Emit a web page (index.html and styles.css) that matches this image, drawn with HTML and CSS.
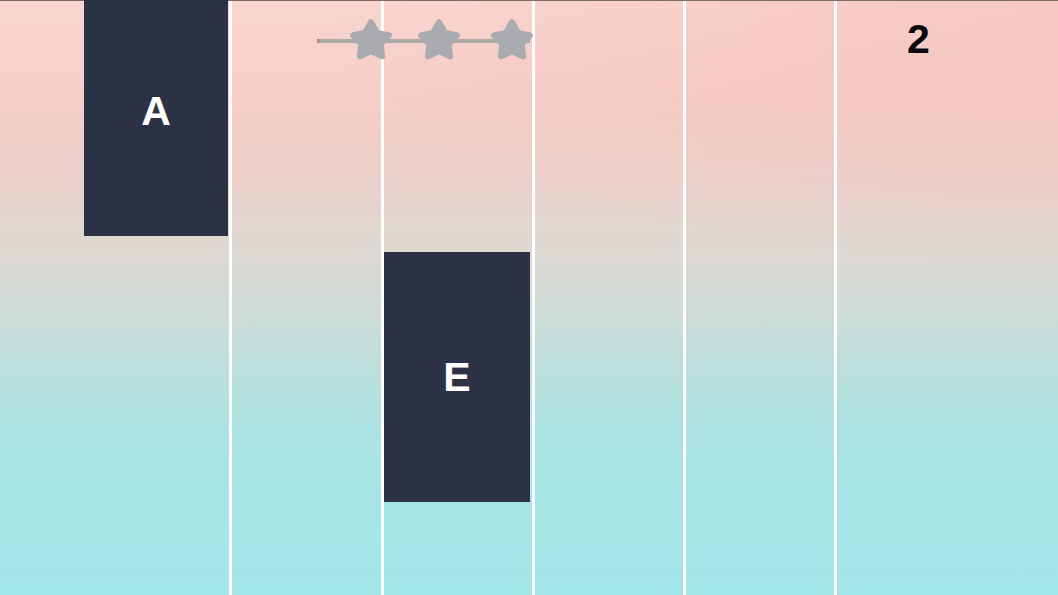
FILE: index.html
```html
<!DOCTYPE html>
<html>
<head>
<meta charset="utf-8">
<link rel="stylesheet" href="styles.css">
</head>
<body>
<div class="stage">
  <div class="lanes">
    <div class="lane lane-first">
      <div class="tile tile-a"><span>A</span></div>
    </div>
    <div class="lane"></div>
    <div class="lane">
      <div class="tile tile-e"><span>E</span></div>
    </div>
    <div class="lane"></div>
    <div class="lane"></div>
    <div class="lane lane-last"></div>
  </div>

  <div class="progress">
    <div class="bar"></div>
    <svg class="star s1" viewBox="0 0 44 42"><polygon points="22,5 27.29,14.72 38.17,16.75 30.56,24.78 31.99,35.75 22,31 12.01,35.75 13.44,24.78 5.83,16.75 16.71,14.72"/></svg>
    <svg class="star s2" viewBox="0 0 44 42"><polygon points="22,5 27.29,14.72 38.17,16.75 30.56,24.78 31.99,35.75 22,31 12.01,35.75 13.44,24.78 5.83,16.75 16.71,14.72"/></svg>
    <svg class="star s3" viewBox="0 0 44 42"><polygon points="22,5 27.29,14.72 38.17,16.75 30.56,24.78 31.99,35.75 22,31 12.01,35.75 13.44,24.78 5.83,16.75 16.71,14.72"/></svg>
  </div>

  <div class="score">2</div>
</div>
</body>
</html>
```

FILE: styles.css
```css
html, body {
  margin: 0;
  padding: 0;
  width: 100%;
  height: 100%;
  overflow: hidden;
}

.stage {
  position: relative;
  width: 1058px;
  height: 595px;
  box-sizing: border-box;
  border-top: 1px solid #7c6a66;
  background:
    radial-gradient(ellipse 70% 45% at 100% 0%, rgba(240,160,155,0.22), rgba(240,160,155,0) 100%),
    linear-gradient(to bottom, #f9d5cf 0%, #f5cec8 17%, #ecd1cb 30%, #e2d6d0 38%, #dbd9d3 44%, #cddcd8 53%, #bcdfdc 62%, #ace3e2 72%, #a6e5e5 82%, #a3e6e8 100%);
  font-family: "Liberation Sans", Arial, sans-serif;
}

.lanes {
  display: flex;
  height: 100%;
  padding-left: 81px;
  box-sizing: border-box;
}

.lane {
  position: relative;
  flex: 0 0 148.25px;
  border-right: 3px solid #ffffff;
}

.lane-last {
  flex: 1 1 auto;
  border-right: none;
}

.tile {
  position: absolute;
  background: #2c3245;
  display: flex;
  align-items: center;
  justify-content: center;
  color: #ffffff;
  font-weight: bold;
  font-size: 41px;
}

.tile-a {
  left: 3px;
  width: 144px;
  top: -15px;
  height: 250px;
}

.tile-e {
  left: 0.5px;
  width: 146px;
  top: 251px;
  height: 250px;
}

.progress {
  position: absolute;
  left: 317px;
  top: 17px;
  width: 225px;
  height: 46px;
}

.bar {
  position: absolute;
  left: 0;
  top: 21px;
  width: 213px;
  height: 4px;
  background: #aaaaa6;
  border-left: 2px solid #c08060;
  box-sizing: border-box;
}

.star {
  position: absolute;
  top: -1px;
  width: 48px;
  height: 46px;
  fill: #a9abb1;
  stroke: #a9abb1;
  stroke-width: 6;
  stroke-linejoin: round;
}

.s1 { left: 30px; }
.s2 { left: 98px; }
.s3 { left: 171px; }

.score {
  position: absolute;
  left: 907px;
  top: 15px;
  font-size: 41px;
  font-weight: bold;
  color: #0a0a0a;
}
```
